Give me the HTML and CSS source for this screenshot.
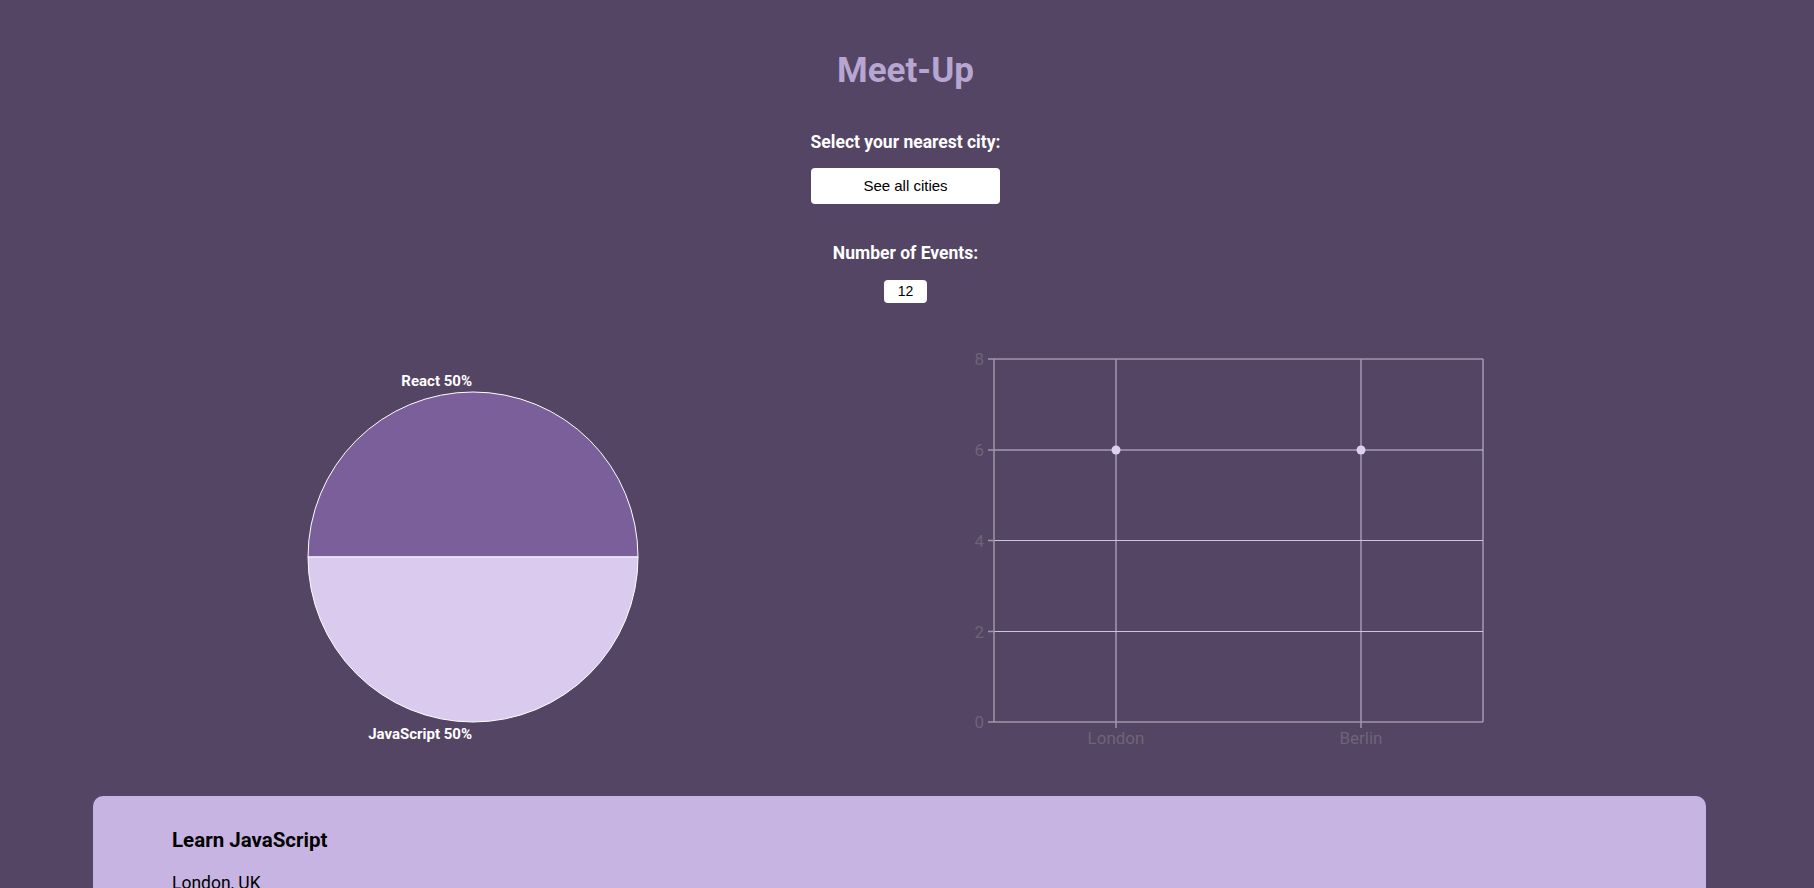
FILE: index.html
```html
<!DOCTYPE html>
<html lang="en">
<head>
<meta charset="utf-8">
<title>Meet-Up</title>
<link rel="stylesheet" href="styles.css">
</head>
<body>
<header class="top">
  <h1 class="title">Meet-Up</h1>
  <h3 class="label label-city">Select your nearest city:</h3>
  <div class="city-input">See all cities</div>
  <h3 class="label label-events">Number of Events:</h3>
  <div class="events-input">12</div>
</header>

<section class="charts">
  <div class="chart-cell">
    <svg class="pie" width="899" height="420" viewBox="0 0 899 420">
      <path d="M300 217 A165 165 0 0 1 630 217 Z" fill="#7b5f9b" stroke="#ffffff" stroke-width="1"/>
      <path d="M630 217 A165 165 0 0 1 300 217 Z" fill="#d9caee" stroke="#ffffff" stroke-width="1"/>
      <text x="464" y="46" text-anchor="end" class="pie-label">React 50%</text>
      <text x="464" y="399" text-anchor="end" class="pie-label">JavaScript 50%</text>
    </svg>
  </div>
  <div class="chart-cell">
    <svg class="line" width="899" height="420" viewBox="0 0 899 420">
      <g class="grid">
        <line x1="87" y1="110" x2="576" y2="110"/>
        <line x1="87" y1="200.5" x2="576" y2="200.5"/>
        <line x1="87" y1="291.5" x2="576" y2="291.5"/>
        <line x1="209" y1="19" x2="209" y2="382"/>
        <line x1="454" y1="19" x2="454" y2="382"/>
        <line x1="576" y1="19" x2="576" y2="382"/>
      </g>
      <g class="frame">
        <line x1="87" y1="19" x2="576" y2="19"/>
        <line x1="87" y1="19" x2="87" y2="382"/>
        <line x1="87" y1="382" x2="576" y2="382"/>
        <line x1="81" y1="19" x2="87" y2="19"/>
        <line x1="81" y1="110" x2="87" y2="110"/>
        <line x1="81" y1="200.5" x2="87" y2="200.5"/>
        <line x1="81" y1="291.5" x2="87" y2="291.5"/>
        <line x1="81" y1="382" x2="87" y2="382"/>
        <line x1="209" y1="382" x2="209" y2="388"/>
        <line x1="454" y1="382" x2="454" y2="388"/>
      </g>
      <g class="ticks">
        <text x="77" y="25" text-anchor="end">8</text>
        <text x="77" y="116" text-anchor="end">6</text>
        <text x="77" y="206.5" text-anchor="end">4</text>
        <text x="77" y="297.5" text-anchor="end">2</text>
        <text x="77" y="388" text-anchor="end">0</text>
        <text x="209" y="404" text-anchor="middle">London</text>
        <text x="454" y="404" text-anchor="middle">Berlin</text>
      </g>
      <circle cx="209" cy="110" r="4.5" fill="#ddd0f1"/>
      <circle cx="454" cy="110" r="4.5" fill="#ddd0f1"/>
    </svg>
  </div>
</section>

<main class="events">
  <article class="event">
    <h2 class="event-title">Learn JavaScript</h2>
    <p class="event-location">London, UK</p>
  </article>
</main>
</body>
</html>
```

FILE: styles.css
```css
html, body {
  margin: 0;
  padding: 0;
}

body {
  background: #534563;
  font-family: Roboto, "Noto Sans", sans-serif;
  color: #ffffff;
  overflow: hidden;
}

.top {
  display: flex;
  flex-direction: column;
  align-items: center;
  padding: 50px 3px 0 0;
}

.title {
  margin: 0;
  font-size: 35px;
  line-height: 41px;
  font-weight: 700;
  color: #b7a5d2;
}

.label {
  margin: 0;
  font-size: 17.5px;
  line-height: 20px;
  font-weight: 700;
  color: #ffffff;
}

.label-city {
  margin-top: 41px;
}

.label-events {
  margin-top: 39px;
}

.city-input {
  margin-top: 16px;
  width: 189px;
  height: 36px;
  box-sizing: border-box;
  background: #ffffff;
  border-radius: 4px;
  color: #000000;
  font-family: "Liberation Sans", Arial, sans-serif;
  font-size: 15px;
  line-height: 36px;
  text-align: center;
}

.events-input {
  margin-top: 17px;
  width: 43px;
  height: 23px;
  background: #ffffff;
  border-radius: 4px;
  color: #000000;
  font-family: "Liberation Sans", Arial, sans-serif;
  font-size: 14px;
  line-height: 23px;
  text-align: center;
}

.charts {
  display: grid;
  grid-template-columns: 1fr 1fr;
  padding: 0 8px;
  margin-top: 37px;
}

.chart-cell {
  height: 420px;
}

.chart-cell svg {
  display: block;
}

.pie-label {
  fill: #ffffff;
  font-family: Roboto, sans-serif;
  font-weight: 700;
  font-size: 15px;
}

.grid line {
  stroke: #cfc2e1;
  stroke-width: 1;
}

.frame line {
  stroke: #a096ad;
  stroke-width: 1.5;
}

.ticks text {
  fill: #6e6479;
  font-family: Roboto, sans-serif;
  font-size: 17px;
}

.events {
  margin: 36px 108px 0 93px;
}

.event {
  background: #c8b4e2;
  border-radius: 10px;
  padding: 32px 40px 40px 79px;
  color: #000000;
}

.event-title {
  margin: 0;
  font-size: 20.5px;
  line-height: 25px;
  font-weight: 700;
}

.event-location {
  margin: 20px 0 0;
  font-size: 17.5px;
  line-height: 20px;
}
```
